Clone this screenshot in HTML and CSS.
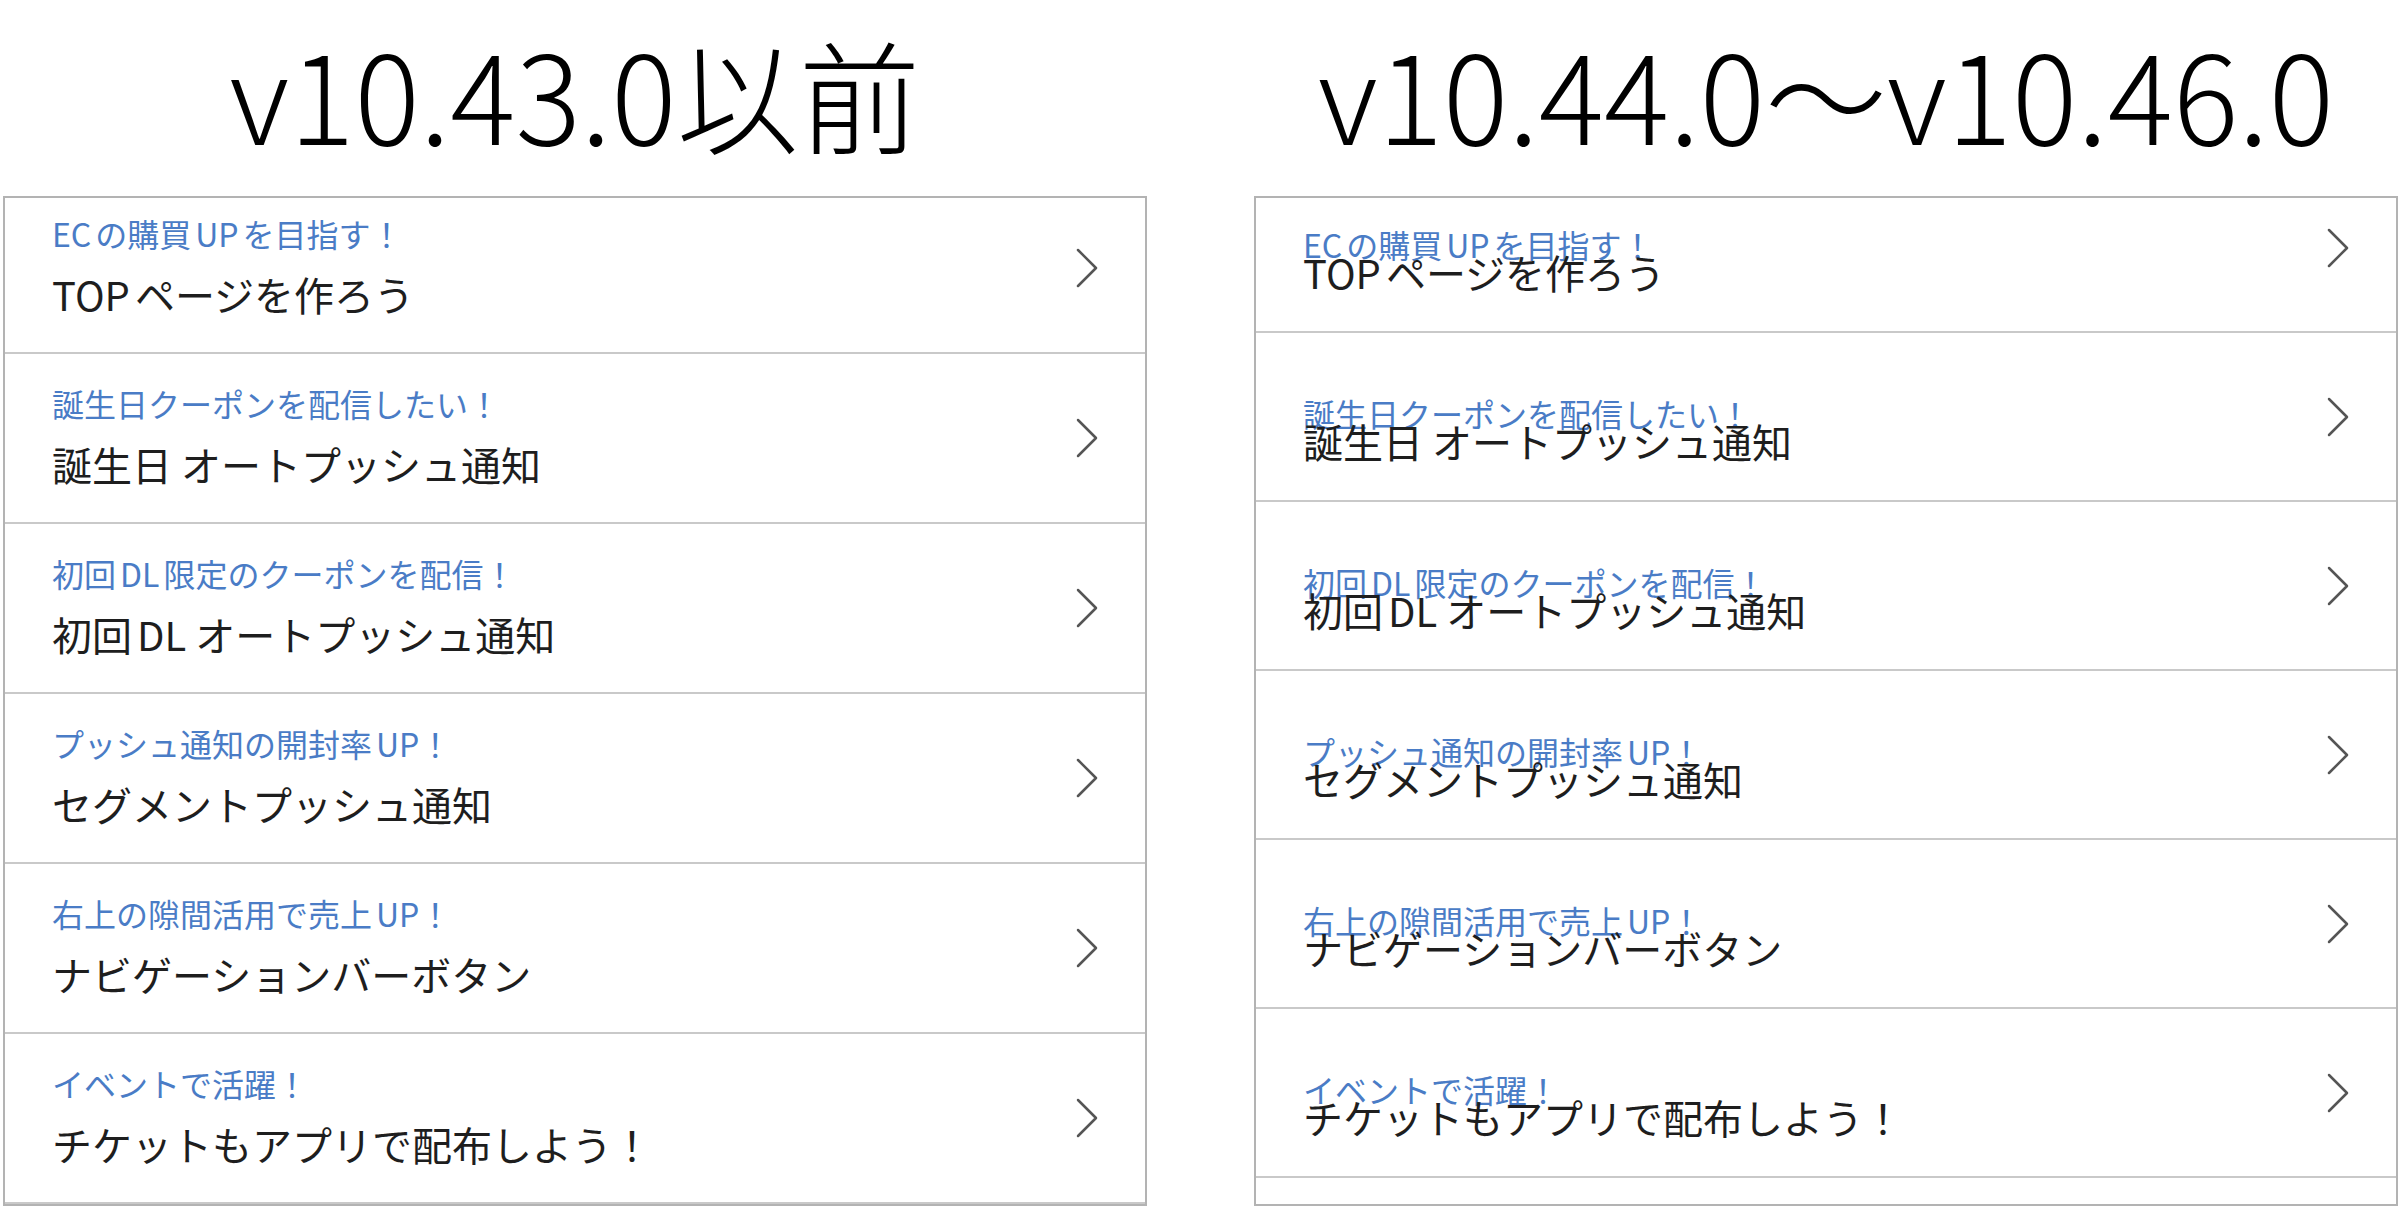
FILE: index.html
```html
<!DOCTYPE html>
<html lang="ja">
<head>
    <meta charset="UTF-8">
    <meta name="viewport" content="width=device-width, initial-scale=1.0">
    <title>メニュー表示の比較</title>
    <link rel="stylesheet" href="styles.css">
</head>
<body>

    <main class="compare">
        <!-- 旧バージョン -->
        <section class="version">
            <h2 class="version-title">v10.43.0以前</h2>
            <div class="menu-panel">
                <ul class="menu-list" id="menu-old"></ul>
            </div>
        </section>

        <!-- 表示が崩れているバージョン -->
        <section class="version version-broken">
            <h2 class="version-title">v10.44.0〜v10.46.0</h2>
            <div class="menu-panel">
                <ul class="menu-list" id="menu-new"></ul>
            </div>
        </section>
    </main>

    <script>
        const menus = [
            { sub: 'ECの購買UPを目指す！', main: 'TOPページを作ろう' },
            { sub: '誕生日クーポンを配信したい！', main: '誕生日 オートプッシュ通知' },
            { sub: '初回DL限定のクーポンを配信！', main: '初回DL オートプッシュ通知' },
            { sub: 'プッシュ通知の開封率UP！', main: 'セグメントプッシュ通知' },
            { sub: '右上の隙間活用で売上UP！', main: 'ナビゲーションバーボタン' },
            { sub: 'イベントで活躍！', main: 'チケットもアプリで配布しよう！' }
        ];

        const chevron = '<svg class="chevron" viewBox="0 0 22 40"><polyline points="2,2 20,20 2,38"/></svg>';

        function renderMenu(id, extraRow) {
            const list = document.getElementById(id);
            list.innerHTML = '';
            menus.forEach(item => {
                list.innerHTML += `
                    <li class="menu-item">
                        <div class="menu-text">
                            <span class="menu-sub">${item.sub}</span>
                            <span class="menu-main">${item.main}</span>
                        </div>
                        ${chevron}
                    </li>`;
            });
            // 下に続く行（画面外）
            if (extraRow) {
                list.innerHTML += '<li class="menu-item"></li>';
            }
        }

        renderMenu('menu-old', false);
        renderMenu('menu-new', true);
    </script>

</body>
</html>
```

FILE: styles.css
```css
/* Reset */
body, html {
    margin: 0;
    padding: 0;
    background-color: #fff;
    font-family: "Noto Sans CJK JP", "Noto Sans", sans-serif;
    color: #1e1e1e;
}

/* Two columns side by side */
.compare {
    display: flex;
    gap: 107px;
    padding: 20px 0 0 3px;
}

.version {
    width: 1144px;
}

.version-title {
    margin: 0 0 32px;
    font-size: 122px;
    font-weight: 300;
    line-height: 144px;
    text-align: center;
    color: #000;
}

/* Phone screen frame */
.menu-panel {
    box-sizing: border-box;
    height: 1010px;
    border: 2px solid #b3b3b3;
    overflow: hidden;
}

.menu-list {
    list-style: none;
    margin: -14px 0 0;
    padding: 0;
}

.menu-item {
    display: flex;
    align-items: center;
    justify-content: space-between;
    box-sizing: border-box;
    height: 170px;
    padding: 0 47px;
    border-bottom: 2px solid #c9c9c9;
}

.menu-text {
    display: flex;
    flex-direction: column;
    margin-bottom: 6px;
}

.menu-sub {
    font-size: 32px;
    line-height: 40px;
    color: #4a7cc6;
    text-autospace: normal;
}

.menu-main {
    margin-top: 17px;
    font-size: 40px;
    line-height: 48px;
    color: #1e1e1e;
    text-autospace: normal;
}

.chevron {
    width: 22px;
    height: 40px;
    flex-shrink: 0;
}

.chevron polyline {
    fill: none;
    stroke: #555;
    stroke-width: 2.5;
    stroke-linecap: round;
    stroke-linejoin: round;
}

/* Broken layout: the two labels overlap */
.version-broken .menu-list {
    margin-top: -34px;
}

.version-broken .menu-item {
    height: 169px;
}

.version-broken .menu-text {
    margin-bottom: 8px;
}

.version-broken .menu-main {
    margin-top: -16px;
    margin-bottom: -32px;
}
```
